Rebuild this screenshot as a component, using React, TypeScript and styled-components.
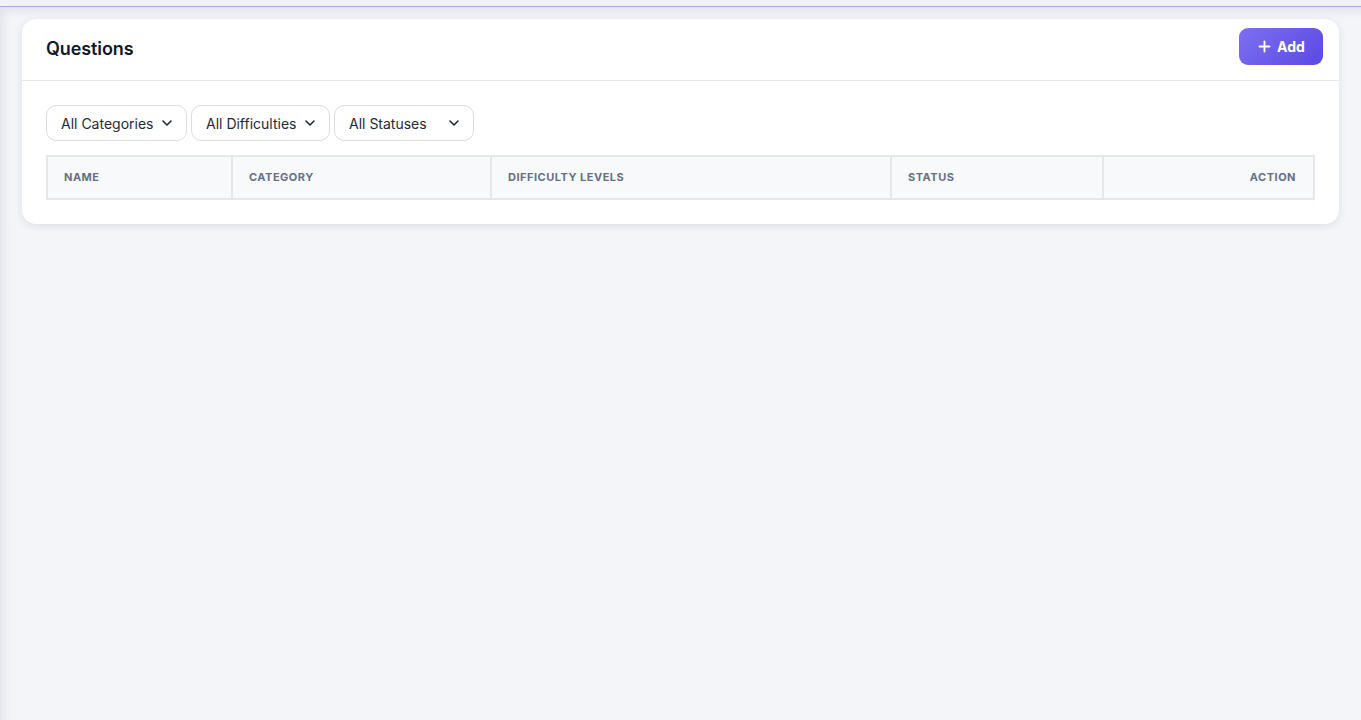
import React from 'react';
import styled, { createGlobalStyle } from 'styled-components';

const GlobalStyle = createGlobalStyle`
  html, body {
    margin: 0;
    padding: 0;
    background: #f4f5f9;
    font-family: Inter, "Noto Sans", sans-serif;
  }
  * { box-sizing: border-box; }
`;

const TopBar = styled.div`
  height: 7px;
  background: #f1f1fb;
  border-bottom: 1px solid #aaa5e8;
`;

const Main = styled.main`
  min-height: 713px;
  padding: 12px 22px 24px 22px;
  background: #f4f5f9;
  box-shadow: inset 8px 8px 10px -4px rgba(30, 30, 60, 0.08);
`;

const Card = styled.section`
  background: #ffffff;
  border-radius: 14px;
  box-shadow: 0 2px 8px rgba(30, 30, 60, 0.1);
`;

const CardHeader = styled.div`
  height: 62px;
  display: flex;
  align-items: center;
  justify-content: space-between;
  padding: 0 16px 0 24px;
  border-bottom: 1px solid #e5e7eb;

  h1 {
    margin: -2px 0 0 0;
    font-size: 18px;
    font-weight: 600;
    letter-spacing: -0.1px;
    color: #111827;
  }
`;

const AddButton = styled.button`
  height: 37px;
  width: 84px;
  display: flex;
  align-items: center;
  justify-content: center;
  gap: 5px;
  border: none;
  border-radius: 9px;
  background: linear-gradient(135deg, #7d6ff2 0%, #5b49e2 100%);
  color: #ffffff;
  font-family: Inter, sans-serif;
  font-size: 14px;
  font-weight: 700;
  cursor: pointer;
  margin-top: -7px;
`;

const CardBody = styled.div`
  padding: 24px 24px 24px 24px;
`;

const Filters = styled.div`
  display: flex;
  gap: 4px;
  margin-bottom: 15px;
`;

const Select = styled.button<{ $width: number }>`
  width: ${(p) => p.$width}px;
  height: 36px;
  display: flex;
  align-items: center;
  justify-content: space-between;
  padding: 0 11px 0 14px;
  border: 1px solid #dadce0;
  border-radius: 10px;
  background: #ffffff;
  color: #1f2937;
  font-family: Inter, sans-serif;
  font-size: 14px;
  cursor: pointer;
`;

const Table = styled.table`
  width: calc(100% - 2px);
  margin-top: -1px;
  border-collapse: collapse;
  table-layout: fixed;
`;

const Th = styled.th<{ $right?: boolean }>`
  height: 43px;
  padding: 0 17px 2px 16px;
  background: #f8f9fb;
  border: 2px solid #e5e7eb;
  text-align: ${(p) => (p.$right ? 'right' : 'left')};
  font-size: 11px;
  font-weight: 700;
  letter-spacing: 0.5px;
  color: #667085;
  text-transform: uppercase;
`;

const Chevron = () => (
  <svg width="16" height="16" viewBox="0 0 24 24" fill="none" stroke="#1f2937" strokeWidth="2.4" strokeLinecap="round" strokeLinejoin="round">
    <path d="m6 9 6 6 6-6" />
  </svg>
);

const Plus = () => (
  <svg width="15" height="15" viewBox="0 0 24 24" fill="none" stroke="#ffffff" strokeWidth="3" strokeLinecap="round">
    <path d="M12 4v16M4 12h16" />
  </svg>
);

const filters = [
  { label: 'All Categories', width: 141 },
  { label: 'All Difficulties', width: 139 },
  { label: 'All Statuses', width: 140 },
];

const columns = [
  { label: 'Name', width: 185 },
  { label: 'Category', width: 259 },
  { label: 'Difficulty Levels', width: 400 },
  { label: 'Status', width: 212 },
  { label: 'Action', width: 211, right: true },
];

const App = () => (
  <>
    <GlobalStyle />
    <TopBar />
    <Main>
      <Card>
        <CardHeader>
          <h1>Questions</h1>
          <AddButton>
            <Plus />
            Add
          </AddButton>
        </CardHeader>
        <CardBody>
          <Filters>
            {filters.map((f) => (
              <Select key={f.label} $width={f.width}>
                {f.label}
                <Chevron />
              </Select>
            ))}
          </Filters>
          <Table>
            <colgroup>
              {columns.map((c) => (
                <col key={c.label} style={{ width: c.width }} />
              ))}
            </colgroup>
            <thead>
              <tr>
                {columns.map((c) => (
                  <Th key={c.label} $right={c.right}>
                    {c.label}
                  </Th>
                ))}
              </tr>
            </thead>
          </Table>
        </CardBody>
      </Card>
    </Main>
  </>
);

export default App;
